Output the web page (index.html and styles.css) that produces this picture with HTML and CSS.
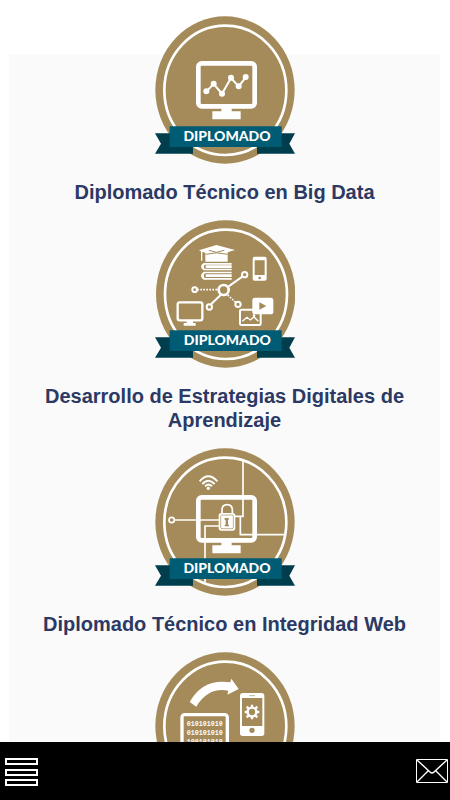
FILE: index.html
```html
<!DOCTYPE html>
<html lang="es">
<head>
    <meta charset="UTF-8">
    <meta name="viewport" content="width=device-width, initial-scale=1.0">
    <title>Diplomados</title>
    <link rel="stylesheet" href="styles.css">
</head>
<body>
    <!-- Piezas comunes de las medallas -->
    <svg class="sprite" aria-hidden="true">
        <symbol id="medal" viewBox="28 17 420 444">
            <ellipse cx="238" cy="239" rx="209" ry="221" fill="#a48b59"/>
            <ellipse cx="239" cy="240" rx="183" ry="194" fill="none" stroke="#fff" stroke-width="8"/>
        </symbol>
        <symbol id="ribbon" viewBox="28 17 420 444">
            <path fill="#003e4e" d="M28 369H142V430H28L46 400ZM448 369H334V430H448L431 400Z"/>
            <path fill="#005b74" d="M72 348H408V410H72Z"/>
        </symbol>
        <symbol id="monitor" viewBox="28 17 420 444">
            <rect x="158" y="159" width="169" height="129" rx="10" fill="none" stroke="#fff" stroke-width="14"/>
            <path fill="#fff" d="M227 290H258V303H285V327H200V303H227Z"/>
        </symbol>
    </svg>

    <main class="content">
        <div class="panel">
            <ul class="course-list">
                <li class="course">
                    <svg class="badge" viewBox="28 17 420 444">
                        <use href="#medal" x="28" y="17" width="420" height="444"/>
                        <use href="#monitor" x="28" y="17" width="420" height="444"/>
                        <path class="line" stroke-width="6" d="M182 243L204 221L229 250L256 203L279 228L300 201"/>
                        <g fill="#fff">
                            <circle cx="182" cy="243" r="9"/>
                            <circle cx="204" cy="220" r="9"/>
                            <circle cx="229" cy="250" r="9"/>
                            <circle cx="256" cy="202" r="9"/>
                            <circle cx="279" cy="228" r="9"/>
                            <circle cx="300" cy="200" r="9"/>
                        </g>
                        <use href="#ribbon" x="28" y="17" width="420" height="444"/>
                        <text class="badge-text" x="244" y="392">DIPLOMADO</text>
                    </svg>
                    <h2 class="course-title"><a href="#big-data">Diplomado Técnico en Big Data</a></h2>
                </li>

                <li class="course">
                    <svg class="badge" viewBox="28 17 420 444">
                        <use href="#medal" x="30" y="17" width="420" height="444"/>
                        <!-- Birrete y libros -->
                        <path fill="#fff" d="M160 108L212 92L268 107L246 114V142H179V115L170 112V139H166V111ZM174 146H258V151H177Q172 157 177 163H258V168H174Q158 157 174 146ZM174 172H258V177H177Q172 184 177 191H258V196H174Q158 184 174 172ZM180 153H258V161H180ZM180 180H258V188H180Z"/>
                        <path fill="none" stroke="#a48b59" stroke-width="3" d="M180 120Q212 111 246 120M190 108L212 114L236 108"/>
                        <!-- Red de nodos -->
                        <path class="line" stroke-width="6" d="M249 216L291 186M225 242L196 270"/>
                        <path class="line" stroke-width="5" stroke-dasharray="5 4" d="M155 226H217M246 242L270 264"/>
                        <g fill="none" stroke="#fff" stroke-width="6">
                            <circle cx="234" cy="227" r="15" stroke-width="8"/>
                            <circle cx="297" cy="181" r="8"/>
                            <circle cx="147" cy="226" r="7"/>
                            <circle cx="191" cy="278" r="8"/>
                            <circle cx="277" cy="270" r="8"/>
                        </g>
                        <!-- Teléfono -->
                        <path fill="#fff" fill-rule="evenodd" d="M327 127H357Q363 127 363 133V193Q363 199 357 199H327Q321 199 321 193V133Q321 127 327 127ZM327 138V182H357V138ZM342 187A4 4 0 1 0 342 195A4 4 0 1 0 342 187Z"/>
                        <!-- Pantalla -->
                        <rect x="96" y="264" width="74" height="54" rx="6" fill="none" stroke="#fff" stroke-width="7"/>
                        <path fill="#fff" d="M123 319H142V326H150V334H114V326H123Z"/>
                        <!-- Imagen y video -->
                        <rect x="283" y="286" width="62" height="46" rx="4" fill="none" stroke="#fff" stroke-width="6"/>
                        <path fill="none" stroke="#fff" stroke-width="4" d="M290 321L304 309L314 317L325 308L338 321"/>
                        <circle cx="325" cy="304" r="4" fill="#fff"/>
                        <rect x="320" y="250" width="63" height="50" rx="8" fill="#fff"/>
                        <path fill="#a48b59" d="M341 264L362 275L341 286Z"/>
                        <use href="#ribbon" x="28" y="17" width="420" height="444"/>
                        <text class="badge-text" x="245" y="392">DIPLOMADO</text>
                    </svg>
                    <h2 class="course-title"><a href="#estrategias">Desarrollo de Estrategias Digitales de Aprendizaje</a></h2>
                </li>

                <li class="course">
                    <svg class="badge" viewBox="28 17 420 444">
                        <use href="#medal" x="28" y="17" width="420" height="444"/>
                        <!-- Circuito -->
                        <path class="line" stroke-width="5" d="M86 233H222M292 56V222H268M284 224V277H416M222 251H178V420"/>
                        <circle cx="78" cy="233" r="8" fill="none" stroke="#fff" stroke-width="5"/>
                        <use href="#monitor" x="28" y="23" width="420" height="444"/>
                        <!-- Candado -->
                        <path fill="none" stroke="#fff" stroke-width="5" d="M229 216V203Q229 187 244 187Q260 187 260 203V216"/>
                        <rect x="219" y="212" width="50" height="53" rx="8" fill="#fff"/>
                        <rect x="225" y="218" width="38" height="41" rx="4" fill="none" stroke="#a48b59" stroke-width="2"/>
                        <path fill="#a48b59" d="M237 227H249V233H247V247H250V252H237V247H240V233H237Z"/>
                        <!-- Wifi -->
                        <g fill="none" stroke="#fff" stroke-width="6">
                            <path d="M162 117Q188 87 215 117"/>
                            <path d="M170 125Q188 105 207 125"/>
                            <path d="M178 132Q188 122 199 132"/>
                        </g>
                        <circle cx="188" cy="138" r="5" fill="#fff"/>
                        <use href="#ribbon" x="28" y="17" width="420" height="444"/>
                        <text class="badge-text" x="244" y="392">DIPLOMADO</text>
                    </svg>
                    <h2 class="course-title"><a href="#integridad">Diplomado Técnico en Integridad Web</a></h2>
                </li>

                <li class="course">
                    <svg class="badge" viewBox="28 17 420 444">
                        <use href="#medal" x="28" y="17" width="420" height="444"/>
                        <!-- Flecha -->
                        <path fill="#fff" d="M132 167Q172 95 254 108L257 97L279 128L245 145L248 133Q187 122 152 181Z"/>
                        <!-- Código binario -->
                        <rect x="109" y="205" width="136" height="130" rx="8" fill="none" stroke="#fff" stroke-width="10"/>
                        <g class="bits">
                            <text x="177" y="240">010101010</text>
                            <text x="177" y="267">010101010</text>
                            <text x="177" y="294">100101010</text>
                        </g>
                        <!-- Teléfono con engrane -->
                        <path fill="#fff" fill-rule="evenodd" d="M291 140H348Q356 140 356 148V261Q356 269 348 269H291Q283 269 283 261V148Q283 140 291 140ZM289 155V239H350V155ZM319 244A8 8 0 1 0 319 260A8 8 0 1 0 319 244Z"/>
                        <path stroke="#a48b59" stroke-width="2" d="M311 148H328"/>
                        <circle cx="319" cy="197" r="13" fill="none" stroke="#fff" stroke-width="7"/>
                        <path stroke="#fff" stroke-width="7" d="M319 175V182M319 212V219M297 197H304M334 197H341M303 181L308 186M330 208L335 213M303 213L308 208M330 186L335 181"/>
                        <use href="#ribbon" x="28" y="17" width="420" height="444"/>
                    </svg>
                </li>
            </ul>
        </div>
    </main>

    <!-- Barra inferior -->
    <footer class="toolbar">
        <button class="tool" type="button" aria-label="Menú">
            <svg width="33" height="30" viewBox="0 0 33 30" fill="none" stroke="#fff" stroke-width="2">
                <path d="M1 3H32V8H1ZM1 14H32V19H1ZM1 24H32V29H1Z"/>
            </svg>
        </button>
        <a class="tool" href="#contacto" aria-label="Contacto">
            <svg width="32" height="30" viewBox="0 0 32 30" fill="none" stroke="#fff">
                <path stroke-width="1" d="M.5 3.500H31.500V26.500H.5Z"/>
                <path stroke-width="1.400" d="M1 4L14 16Q16 18 18 16L31 4M1 26L12 15M31 26L20 15"/>
            </svg>
        </a>
    </footer>
</body>
</html>
```
FILE: styles.css
```css
* {
    box-sizing: border-box;
}

body {
    display: flex;
    flex-direction: column;
    height: 100vh;
    margin: 0;
    font-family: "Liberation Sans", Arial, sans-serif;
    background: #fff;
}

.sprite {
    position: absolute;
    width: 0;
    height: 0;
}

/* Contenido */
.content {
    flex: 1;
    min-height: 0;
    overflow-y: auto;
    scrollbar-width: none;
}

.panel {
    display: flow-root;
    margin: 54px 10px 0 9px;
    background: #fafafa;
}

/* La primera medalla sobresale del panel */
.course-list {
    margin: -38px 0 0;
    padding: 0 16px;
    list-style: none;
}

.course {
    display: flex;
    flex-direction: column;
    align-items: center;
    gap: 16px;
    padding-bottom: 16px;
}

.badge {
    display: block;
    width: 140px;
    height: 148px;
}

.badge .line {
    fill: none;
    stroke: #fff;
}

.badge-text {
    font-family: Lato, "Open Sans", sans-serif;
    font-size: 42px;
    font-weight: 900;
    text-anchor: middle;
    fill: #fff;
}

.bits text {
    font-family: "Liberation Mono", monospace;
    font-size: 20px;
    font-weight: 700;
    text-anchor: middle;
    fill: #fff;
}

.course-title {
    margin: 0;
    font-size: 20px;
    font-weight: 700;
    line-height: 24px;
    text-align: center;
}

.course-title a {
    color: #2b3964;
    text-decoration: none;
}

/* Barra inferior */
.toolbar {
    display: flex;
    flex-shrink: 0;
    align-items: center;
    justify-content: space-between;
    height: 58px;
    padding: 0 2px 0 5px;
    background: #000;
}

.tool {
    display: block;
    padding: 0;
    border: 0;
    background: none;
    cursor: pointer;
}

.tool svg {
    display: block;
}
```
